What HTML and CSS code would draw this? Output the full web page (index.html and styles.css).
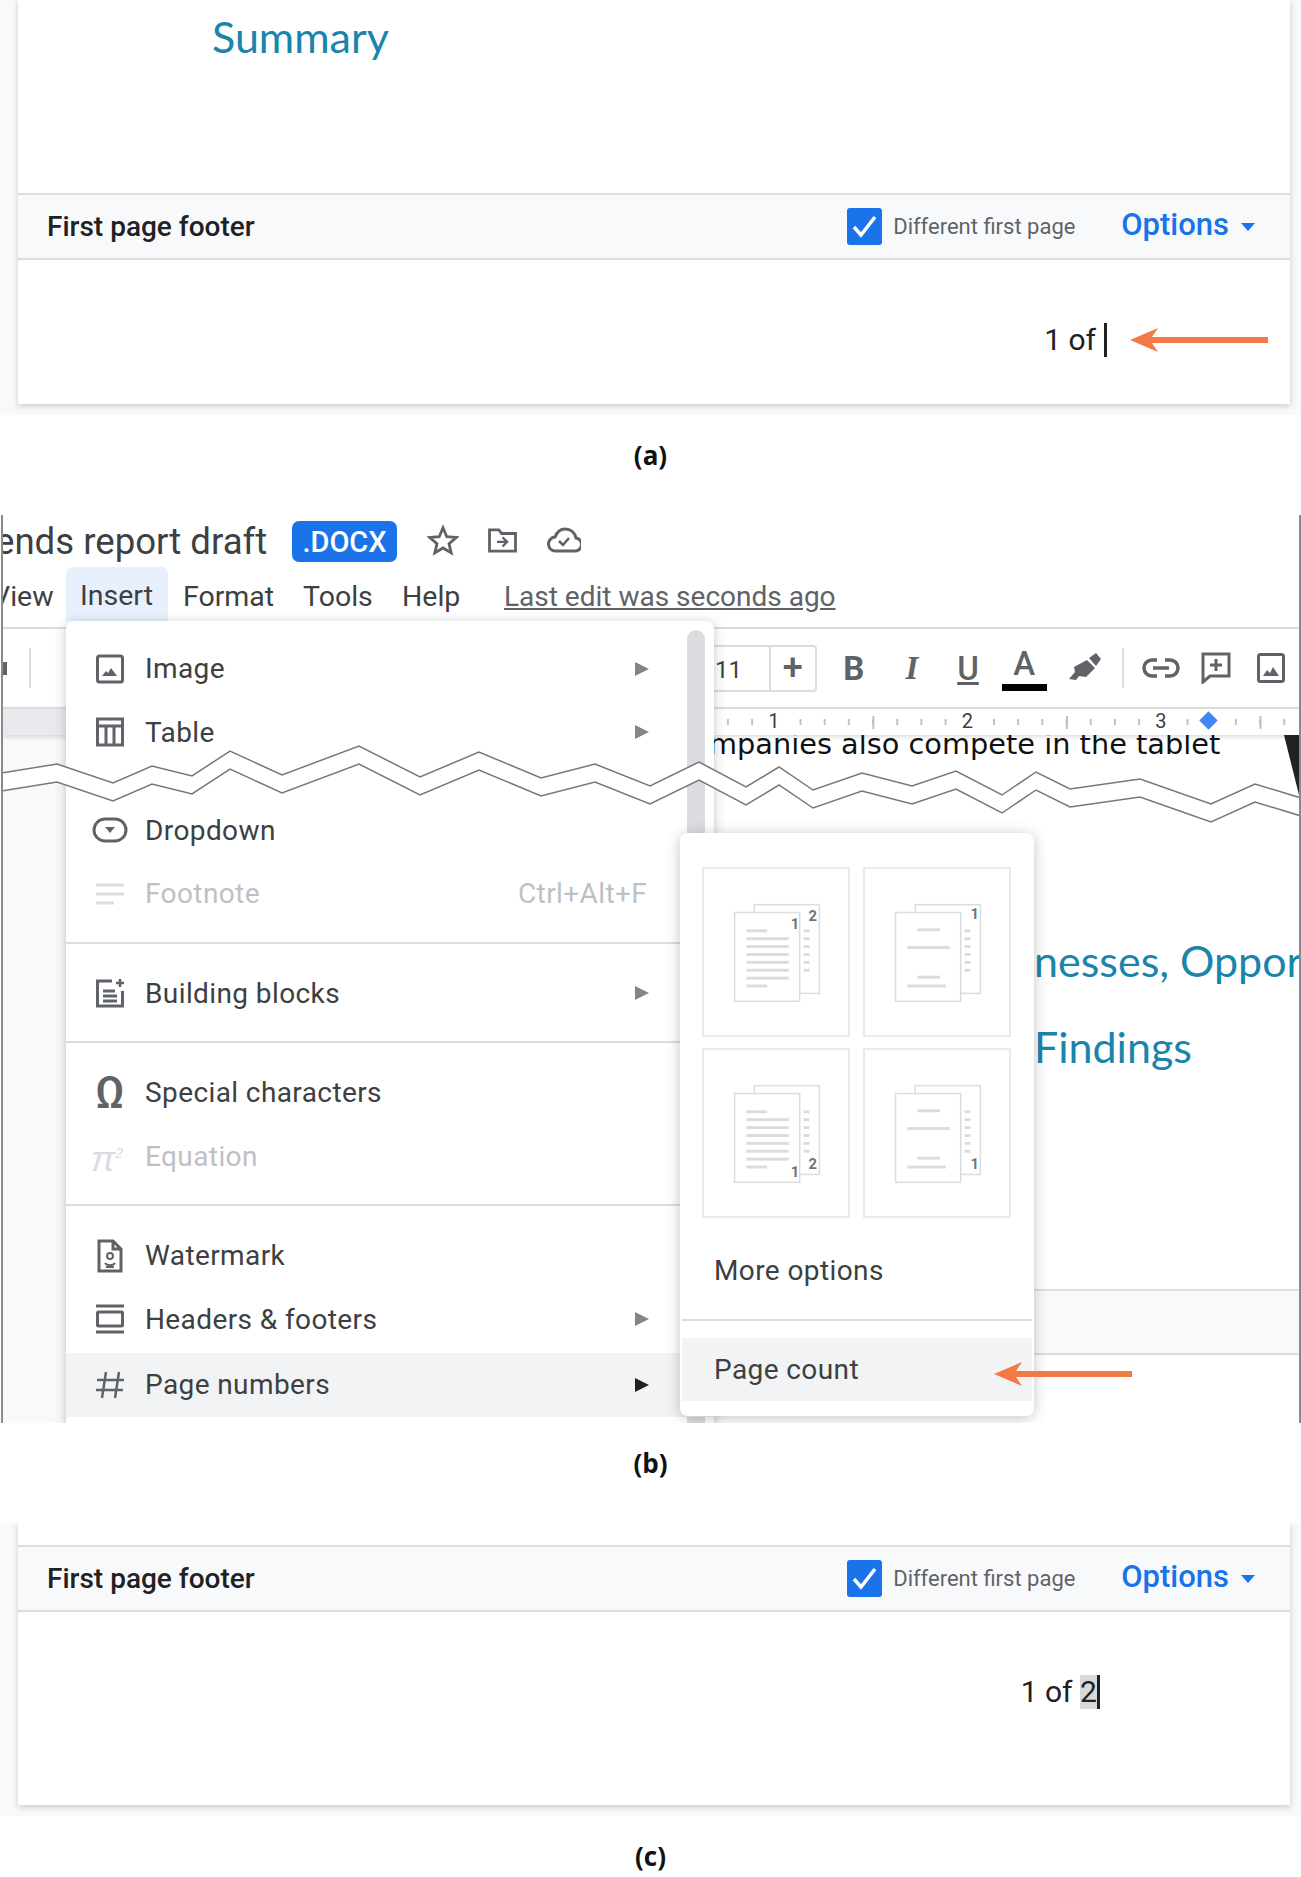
FILE: index.html
```html
<!DOCTYPE html>
<html lang="en">

<head>
    <meta charset="UTF-8">
    <title>Page count in a footer</title>
    <link rel="stylesheet" href="styles.css">
</head>

<body>
    <svg class="defs" width="0" height="0">
        <symbol id="pages" viewBox="0 0 148 168">
            <rect x="52" y="37" width="66" height="90" fill="#fff" stroke="#dadce0" stroke-width="1.5" />
            <rect x="32" y="45" width="66" height="90" fill="#fff" stroke="#dadce0" stroke-width="1.5" />
            <g fill="#dadce0">
                <rect x="102" y="62" width="6" height="3" />
                <rect x="102" y="70" width="6" height="3" />
                <rect x="102" y="78" width="6" height="3" />
                <rect x="102" y="86" width="6" height="3" />
                <rect x="102" y="94" width="6" height="3" />
                <rect x="102" y="102" width="6" height="3" />
            </g>
        </symbol>
        <symbol id="lines-dense" viewBox="0 0 148 168">
            <g fill="#dadce0">
                <rect x="44" y="62" width="21" height="3" />
                <rect x="44" y="70" width="43" height="3" />
                <rect x="44" y="78" width="43" height="3" />
                <rect x="44" y="86" width="43" height="3" />
                <rect x="44" y="94" width="43" height="3" />
                <rect x="44" y="102" width="43" height="3" />
                <rect x="44" y="110" width="43" height="3" />
                <rect x="44" y="118" width="21" height="3" />
            </g>
        </symbol>
        <symbol id="lines-sparse" viewBox="0 0 148 168">
            <g fill="#dadce0">
                <rect x="54" y="61" width="23" height="3" />
                <rect x="44" y="79" width="43" height="3" />
                <rect x="54" y="109" width="23" height="3" />
                <rect x="44" y="118" width="39" height="3" />
            </g>
        </symbol>
    </svg>

    <section class="panel">
        <div class="page">
            <div class="page-head">Summary</div>
            <div class="footer-bar">
                <span class="footer-title">First page footer</span>
                <span class="checkbox">
                    <svg width="35" height="37" viewBox="0 0 35 37"><path d="M7 19l7 8L28 9" fill="none" stroke="#fff" stroke-width="3.5" /></svg>
                </span>
                <span class="checkbox-label">Different first page</span>
                <span class="options">Options</span>
                <span class="options-caret"></span>
            </div>
            <div class="footer-body">
                <span class="page-field">1 of</span><span class="caret"></span>
            </div>
        </div>
        <svg class="arrow arrow-a" width="140" height="26" viewBox="0 0 140 26"><path d="M0 13L28 1l-6 9h116v6H22l6 9z" fill="#f47a45" /></svg>
    </section>
    <div class="caption">(a)</div>

    <section class="shot">
        <div class="title-row">
            <span class="doc-title">ends report draft</span>
            <span class="docx">.DOCX</span>
            <svg class="title-icon icon-star" width="32" height="32" viewBox="0 0 34 34"><path d="M17 4l4 9.500 10 .8-7.600 6.600 2.300 9.800L17 25.500 8.300 30.700l2.300-9.800L3 14.300l10-.8z" fill="none" stroke="#5f6368" stroke-width="3" /></svg>
            <svg class="title-icon icon-folder" width="31" height="26" viewBox="0 0 32 28"><path d="M2 3h10l3 4h15v19H2z" fill="none" stroke="#5f6368" stroke-width="3" /><path d="M10 16h10M16 11l5 5-5 5" fill="none" stroke="#5f6368" stroke-width="2.500" /></svg>
            <svg class="title-icon" width="34" height="26" viewBox="0 0 34 26"><path d="M9 24a7 7 0 0 1-1-14C10 5 14 2 18 2c6 0 10 4 11 9a6.500 6.500 0 0 1-2 13z" fill="none" stroke="#5f6368" stroke-width="3" /><path d="M12 14l4 4 6-7" fill="none" stroke="#5f6368" stroke-width="2.500" /></svg>
        </div>

        <div class="menu-bar">
            <span class="menu-view">View</span>
            <span class="menu-insert">Insert</span>
            <span class="menu-format">Format</span>
            <span class="menu-tools">Tools</span>
            <span class="menu-help">Help</span>
            <span class="last-edit">Last edit was seconds ago</span>
        </div>

        <div class="toolbar">
            <span class="tool-stub"></span>
            <span class="tool-sep tool-sep-left"></span>
            <div class="font-box">
                <span class="font-size">11</span>
                <span class="font-plus">+</span>
            </div>
            <span class="tool tool-b">B</span>
            <span class="tool tool-i">I</span>
            <span class="tool tool-u">U</span>
            <span class="tool tool-a">A</span>
            <span class="tool tool-pen">
                <svg width="34" height="34" viewBox="0 0 34 34"><path d="M21 7l7-5 5 6-5 7zM19 9l8 8-9 9-7-1-3 4-7-1 6-7-1-5z" fill="#5f6368" /></svg>
            </span>
            <span class="tool-sep tool-sep-right"></span>
            <span class="tool">
                <svg width="38" height="22" viewBox="0 0 38 22"><path d="M15 3H10a8 8 0 0 0 0 16h5M23 3h5a8 8 0 0 1 0 16h-5M11 11h16" fill="none" stroke="#5f6368" stroke-width="3.500" /></svg>
            </span>
            <span class="tool tool-comment">
                <svg width="30" height="32" viewBox="0 0 30 32"><path d="M2 2h26v22H9l-7 6zM15 7v12M9 13h12" fill="none" stroke="#5f6368" stroke-width="3" /></svg>
            </span>
            <span class="tool">
                <svg width="28" height="30" viewBox="0 0 28 30"><rect x="1.500" y="1.500" width="25" height="27" rx="2" fill="none" stroke="#5f6368" stroke-width="3" /><path d="M6 23l4-6 3 3 3-6 6 9z" fill="#5f6368" /></svg>
            </span>
        </div>

        <div class="ruler">
            <span class="ruler-margin"></span>
            <span class="ruler-num ruler-first"><b>1</b></span>
            <span class="ruler-num"><b>2</b></span>
            <span class="ruler-num"><b>3</b></span>
            <span class="ruler-stop"></span>
        </div>

        <div class="doc">
            <div class="doc-page">
                <p class="doc-text">mpanies also compete in the tablet</p>
                <span class="doc-picture"></span>
                <h2 class="doc-heading doc-heading-first">nesses, Oppor</h2>
                <h2 class="doc-heading doc-heading-second">Findings</h2>
                <div class="doc-footer-bar"></div>
            </div>
        </div>

        <div class="menu">
            <span class="menu-scroll"></span>
            <div class="menu-item">
                <svg class="menu-icon" width="30" height="30" viewBox="0 0 30 30"><rect x="2.500" y="2" width="25" height="26" rx="2" fill="none" stroke="#5f6368" stroke-width="3" /><path d="M7 22l4-5 2 2 3-5 6 8z" fill="#5f6368" /></svg>
                <span class="menu-label">Image</span>
                <span class="menu-tri"></span>
            </div>
            <div class="menu-item menu-item-cut">
                <svg class="menu-icon" width="30" height="30" viewBox="0 0 30 30"><path d="M2.500 2h25v26h-25zM2 9h26M11 9v19M19 9v19" fill="none" stroke="#5f6368" stroke-width="3" /></svg>
                <span class="menu-label">Table</span>
                <span class="menu-tri"></span>
            </div>
            <div class="menu-item">
                <svg class="menu-icon menu-icon-wide" width="36" height="26" viewBox="0 0 36 26"><rect x="2" y="2" width="32" height="22" rx="11" fill="none" stroke="#5f6368" stroke-width="3" /><path d="M13 10h10l-5 6z" fill="#5f6368" /></svg>
                <span class="menu-label">Dropdown</span>
            </div>
            <div class="menu-item menu-item-off">
                <svg class="menu-icon" width="30" height="30" viewBox="0 0 30 30"><path d="M1 6h28M1 15h28M1 24h18" fill="none" stroke="#dadce0" stroke-width="3" /></svg>
                <span class="menu-label">Footnote</span>
                <span class="menu-shortcut">Ctrl+Alt+F</span>
            </div>
            <div class="menu-line"></div>
            <div class="menu-item">
                <svg class="menu-icon" width="30" height="30" viewBox="0 0 30 30"><path d="M17 3H2.500v25h25V13M8 13h12M8 18h14M8 23h14" fill="none" stroke="#5f6368" stroke-width="3" /><path d="M25 1v8M21 5h8" fill="none" stroke="#5f6368" stroke-width="2.500" /></svg>
                <span class="menu-label">Building blocks</span>
                <span class="menu-tri"></span>
            </div>
            <div class="menu-line"></div>
            <div class="menu-item">
                <span class="menu-glyph">Ω</span>
                <span class="menu-label">Special characters</span>
            </div>
            <div class="menu-item menu-item-off">
                <span class="menu-glyph menu-glyph-pi">π<sup>2</sup></span>
                <span class="menu-label">Equation</span>
            </div>
            <div class="menu-line"></div>
            <div class="menu-item">
                <svg class="menu-icon" width="30" height="34" viewBox="0 0 30 34"><path d="M4 2h14l8 8v22H4zM18 2v8h8" fill="none" stroke="#5f6368" stroke-width="3" /><circle cx="15" cy="17" r="3" fill="none" stroke="#5f6368" stroke-width="2" /><path d="M10 24c2 3 8 3 10 0M11 28h8" fill="none" stroke="#5f6368" stroke-width="2" /></svg>
                <span class="menu-label">Watermark</span>
            </div>
            <div class="menu-item">
                <svg class="menu-icon" width="30" height="30" viewBox="0 0 30 30"><path d="M1 2h28M1 28h28" fill="none" stroke="#5f6368" stroke-width="3" /><rect x="2.500" y="8" width="25" height="14" rx="1" fill="none" stroke="#5f6368" stroke-width="3" /></svg>
                <span class="menu-label">Headers &amp; footers</span>
                <span class="menu-tri"></span>
            </div>
            <div class="menu-item menu-item-on">
                <svg class="menu-icon" width="30" height="30" viewBox="0 0 30 30"><path d="M11 2L7 28M24 2l-4 26M2 10h27M1 20h27" fill="none" stroke="#5f6368" stroke-width="2.500" /></svg>
                <span class="menu-label">Page numbers</span>
                <span class="menu-tri menu-tri-on"></span>
            </div>
        </div>

        <svg class="zigzag" width="1301" height="907" viewBox="0 0 1301 907">
            <polygon fill="#fff" points="2,258 57,249 113,268 152,251 192,261 230,236 282,260 359,231 420,262 479,237 541,263 595,249 650,271 699,247 746,272 779,252 813,275 862,258 912,271 956,256 1002,280 1036,257 1070,274 1140,264 1211,289 1255,269 1301,283 1301,301 1255,287 1211,307 1140,282 1070,292 1036,275 1002,298 956,274 912,289 862,276 813,293 779,270 746,290 699,265 650,289 595,267 541,281 479,255 420,280 359,249 282,278 230,254 192,279 152,269 113,286 57,267 2,276" />
            <polyline id="zig" fill="none" stroke="#777" stroke-width="1.500" points="2,258 57,249 113,268 152,251 192,261 230,236 282,260 359,231 420,262 479,237 541,263 595,249 650,271 699,247 746,272 779,252 813,275 862,258 912,271 956,256 1002,280 1036,257 1070,274 1140,264 1211,289 1255,269 1301,283" />
            <use href="#zig" y="18" />
        </svg>

        <div class="submenu">
            <div class="thumbs">
                <div class="thumb">
                    <svg width="146" height="168" viewBox="0 0 148 170"><use href="#pages" width="148" height="168" /><use href="#lines-dense" width="148" height="168" /><text class="thumb-num" x="89" y="62">1</text><text class="thumb-num" x="107" y="54">2</text></svg>
                </div>
                <div class="thumb">
                    <svg width="146" height="168" viewBox="0 0 148 170"><use href="#pages" width="148" height="168" /><use href="#lines-sparse" width="148" height="168" /><text class="thumb-num" x="108" y="52">1</text></svg>
                </div>
                <div class="thumb">
                    <svg width="146" height="168" viewBox="0 0 148 170"><use href="#pages" width="148" height="168" /><use href="#lines-dense" width="148" height="168" /><text class="thumb-num" x="89" y="130">1</text><text class="thumb-num" x="107" y="122">2</text></svg>
                </div>
                <div class="thumb">
                    <svg width="146" height="168" viewBox="0 0 148 170"><use href="#pages" width="148" height="168" /><use href="#lines-sparse" width="148" height="168" /><text class="thumb-num" x="108" y="122">1</text></svg>
                </div>
            </div>
            <div class="sub-item sub-item-more">More options</div>
            <div class="menu-line sub-line"></div>
            <div class="sub-item sub-item-on">Page count</div>
        </div>
        <svg class="arrow arrow-b" width="140" height="26" viewBox="0 0 140 26"><path d="M0 13L28 1l-6 9h116v6H22l6 9z" fill="#f47a45" /></svg>
    </section>
    <div class="caption">(b)</div>

    <section class="panel panel-c">
        <div class="page">
            <div class="page-head page-head-c"></div>
            <div class="footer-bar">
                <span class="footer-title">First page footer</span>
                <span class="checkbox">
                    <svg width="35" height="37" viewBox="0 0 35 37"><path d="M7 19l7 8L28 9" fill="none" stroke="#fff" stroke-width="3.5" /></svg>
                </span>
                <span class="checkbox-label">Different first page</span>
                <span class="options">Options</span>
                <span class="options-caret"></span>
            </div>
            <div class="footer-body footer-body-c">
                <span class="page-field">1 of <span class="page-total">2</span></span><span class="caret caret-c"></span>
            </div>
        </div>
    </section>
    <div class="caption caption-last">(c)</div>
</body>

</html>
```

FILE: styles.css
```css
body {
    margin: 0;
    padding: 0;
    width: 1301px;
    overflow-x: hidden;
    background-color: #fff;
    font-family: Roboto, sans-serif;
    color: #3c4043;
}

.defs {
    position: absolute;
}

/* footer panels (a) and (c) */
.panel {
    position: relative;
    height: 415px;
    padding: 0 11px 11px 18px;
    box-sizing: border-box;
    overflow: hidden;
    background-color: #f8f9fa;
}

.panel-c {
    height: 293px;
}

.page {
    height: 100%;
    background-color: #fff;
    box-shadow: 0 2px 6px rgba(60, 64, 67, 0.25);
}

.page-head {
    height: 193px;
    padding: 10px 0 0 194px;
    box-sizing: border-box;
    font-family: Lato, sans-serif;
    font-size: 43px;
    line-height: 54px;
    color: #1a84ab;
}

.page-head-c {
    height: 22px;
    padding: 0;
}

.footer-bar {
    display: flex;
    align-items: center;
    height: 67px;
    padding: 0 35px 0 29px;
    box-sizing: border-box;
    background-color: #f8f9fa;
    border-top: 2px solid #dadce0;
    border-bottom: 2px solid #dadce0;
}

.footer-title {
    margin-right: auto;
    font-size: 28px;
    font-weight: 500;
    color: #202124;
}

.checkbox {
    display: flex;
    width: 35px;
    height: 37px;
    background-color: #1a73e8;
    border-radius: 3px;
}

.checkbox-label {
    margin-left: 11px;
    width: 183px;
    font-size: 22px;
    color: #5f6368;
    white-space: nowrap;
}

.options {
    margin-left: 45px;
    font-size: 31px;
    font-weight: 500;
    line-height: 34px;
    margin-top: -3px;
    color: #1a73e8;
}

.options-caret {
    margin-left: 12px;
    border-top: 8px solid #1a73e8;
    border-left: 7px solid transparent;
    border-right: 7px solid transparent;
}

.footer-body {
    display: flex;
    justify-content: flex-end;
    padding: 63px 183px 0 0;
    font-size: 30px;
    line-height: 34px;
    color: #202124;
}

.footer-body-c {
    padding-right: 190px;
}

.page-field {
    white-space: pre;
}

.page-total {
    display: inline-block;
    width: 17px;
    background-color: #d8d8d8;
}

.caret {
    width: 3px;
    height: 34px;
    margin-left: 8px;
    background-color: #202124;
}

.caret-c {
    margin-left: 0;
}

.caption {
    height: 100px;
    padding-top: 25px;
    box-sizing: border-box;
    text-align: center;
    font-family: "Open Sans", sans-serif;
    font-size: 26px;
    line-height: 30px;
    font-weight: 700;
    color: #111;
}

.caption-last {
    height: 62px;
}

.arrow {
    position: absolute;
}

.arrow-a {
    left: 1130px;
    top: 327px;
}

.arrow-b {
    left: 991px;
    top: 846px;
    z-index: 6;
}

/* screenshot (b) */
.shot {
    position: relative;
    height: 908px;
    width: 1300px;
    margin-left: 1px;
    box-sizing: border-box;
    overflow: hidden;
    border-left: 2px solid #8a8a8a;
    border-right: 2px solid #8a8a8a;
    background-color: #fff;
}

.title-row {
    display: flex;
    align-items: center;
    height: 52px;
}

.doc-title {
    margin-left: -8px;
    width: 297px;
    font-size: 36.6px;
    color: #3c4043;
    white-space: nowrap;
}

.docx {
    width: 105px;
    height: 41px;
    margin-right: 30px;
    line-height: 43px;
    text-align: center;
    font-size: 29px;
    font-weight: 500;
    color: #fff;
    background-color: #1a73e8;
    border-radius: 7px;
}

.title-icon {
    margin: 0 29px 2px 0;
}

.icon-star {
    margin: 0 28px 2px 0;
}

.menu-bar {
    display: flex;
    align-items: center;
    height: 60px;
    font-size: 28.5px;
    color: #3c4043;
    border-bottom: 2px solid #dadce0;
    box-sizing: content-box;
}

.menu-view {
    margin-left: -11px;
    width: 74px;
    padding-bottom: 2px;
}

.menu-insert {
    height: 54px;
    width: 102px;
    padding-left: 14px;
    margin-bottom: 6px;
    box-sizing: border-box;
    line-height: 58px;
    background-color: #e8f0fe;
    border-radius: 6px 6px 0 0;
}

.menu-format {
    margin-left: 15px;
    width: 120px;
    padding-bottom: 2px;
}

.menu-tools {
    width: 99px;
    padding-bottom: 2px;
}

.menu-help {
    width: 102px;
    padding-bottom: 2px;
}

.last-edit {
    font-size: 28px;
    padding-bottom: 2px;
    color: #5f6368;
    text-decoration: underline;
}

.toolbar {
    display: flex;
    align-items: center;
    height: 78px;
    background-color: #fff;
}

.tool-stub {
    width: 4px;
    height: 13px;
    background-color: #5f6368;
}

.tool-sep {
    width: 2px;
    height: 40px;
    background-color: #dadce0;
}

.tool-sep-left {
    margin-left: 22px;
}

.tool-sep-right {
    margin: 0 9px;
}

.font-box {
    display: flex;
    height: 47px;
    width: 167px;
    margin-left: 620px;
    margin-right: 9px;
    border: 2px solid #dadce0;
    border-radius: 4px;
    box-sizing: border-box;
}

.font-size {
    width: 118px;
    padding-left: 62px;
    box-sizing: border-box;
    line-height: 47px;
    font-size: 24px;
    color: #3c4043;
    border-right: 2px solid #dadce0;
}

.font-plus {
    flex: 1;
    text-align: center;
    line-height: 42px;
    font-size: 36px;
    font-weight: 500;
    color: #5f6368;
}

.tool {
    display: flex;
    align-items: center;
    justify-content: center;
    width: 56.500px;
    height: 50px;
    font-size: 33px;
    color: #5f6368;
}

.tool-b {
    font-weight: 700;
}

.tool-i {
    margin-left: 2px;
    font-family: "Liberation Serif", serif;
    font-style: italic;
    font-weight: 700;
}

.tool-u {
    font-weight: 500;
    text-decoration: underline;
    text-decoration-thickness: 3px;
}

.tool-a {
    height: 47px;
    padding-top: 3px;
    margin-bottom: 4px;
    align-items: flex-start;
    font-weight: 500;
    background: linear-gradient(#000, #000) center bottom / 45px 7px no-repeat;
}

.tool-pen {
    margin-left: 5px;
}

.tool-comment {
    width: 54px;
}

.ruler {
    position: relative;
    z-index: 2;
    display: flex;
    align-items: center;
    height: 28px;
    box-sizing: border-box;
    border-top: 2px solid #dadce0;
    background:
        linear-gradient(90deg, #bdc1c6 1.5px, transparent 1.5px) 95px center / 193.600px 13px repeat-x,
        linear-gradient(90deg, #bdc1c6 1.5px, transparent 1.5px) 22.500px center / 24.200px 6px repeat-x,
        #fff;
    box-shadow: 0 2px 4px rgba(60, 64, 67, 0.18);
}

.ruler-margin {
    width: 100px;
    height: 100%;
    background-color: #e8eaed;
}

.ruler-num {
    width: 193.600px;
    text-align: center;
    line-height: 24px;
}

.ruler-first {
    margin-left: 574px;
}

.ruler-num b {
    padding: 0 3px;
    font-size: 20px;
    font-weight: 400;
    color: #3c4043;
    background-color: #fff;
}

.ruler-stop {
    position: absolute;
    left: 1199px;
    top: 5px;
    width: 13px;
    height: 13px;
    background-color: #4285f4;
    transform: rotate(45deg);
}

.doc {
    height: 689px;
    background-color: #f8f9fa;
}

.doc-page {
    position: relative;
    height: 100%;
    margin-left: 63px;
    background-color: #fff;
}

.doc-text {
    margin: 0;
    padding: 0 0 0 643px;
    font-family: "DejaVu Sans", sans-serif;
    font-size: 28.8px;
    line-height: 19px;
    color: #111;
    white-space: nowrap;
}

.doc-picture {
    position: absolute;
    left: 1218px;
    top: 0;
    width: 15px;
    height: 60px;
    background-color: #222;
    clip-path: polygon(0 0, 100% 0, 100% 100%);
}

.doc-heading {
    margin: 0;
    padding-left: 968px;
    font-family: Lato, sans-serif;
    font-weight: 400;
    font-size: 43px;
    line-height: 54px;
    color: #1a84ab;
    white-space: nowrap;
}

.doc-heading-first {
    margin-top: 180px;
}

.doc-heading-second {
    margin-top: 32px;
}

.doc-footer-bar {
    height: 66px;
    margin-top: 215px;
    box-sizing: border-box;
    background-color: #f8f9fa;
    border-top: 2px solid #dadce0;
    border-bottom: 2px solid #dadce0;
}

/* insert menu */
.menu {
    position: absolute;
    z-index: 3;
    left: 63px;
    top: 106px;
    width: 648px;
    height: 830px;
    padding-top: 16px;
    box-sizing: border-box;
    background-color: #fff;
    border-radius: 8px 8px 0 0;
    box-shadow: 0 2px 12px rgba(60, 64, 67, 0.3);
}

.menu-scroll {
    position: absolute;
    left: 621px;
    top: 9px;
    width: 18px;
    height: 821px;
    background-color: #dadce0;
    border-radius: 9px;
}

.menu-item {
    position: relative;
    display: flex;
    align-items: center;
    height: 63.500px;
    padding-left: 29px;
    font-size: 28px;
    color: #3c4043;
}

.menu-item-cut {
    margin-bottom: 34.5px;
}

.menu-item-on {
    margin-top: 2px;
    background-color: #f1f3f4;
}

.menu-item-off {
    color: #bdc1c6;
}

.menu-icon {
    width: 30px;
    flex: none;
}

.menu-icon-wide {
    width: 36px;
    margin-left: -3px;
    margin-right: -3px;
}

.menu-glyph {
    width: 30px;
    text-align: center;
    font-size: 44px;
    line-height: 42px;
    font-weight: 500;
    color: #5f6368;
}

.menu-glyph-pi {
    margin-left: -4px;
    margin-right: 4px;
    font-family: "Liberation Sans", sans-serif;
    font-size: 36px;
    font-weight: 400;
    font-style: italic;
    white-space: nowrap;
    color: #dadce0;
}

.menu-glyph-pi sup {
    font-size: 14px;
}

.menu-label {
    margin-left: 20px;
    letter-spacing: 0.4px;
}

.menu-shortcut {
    position: absolute;
    left: 452px;
    letter-spacing: 0.4px;
}

.menu-tri {
    position: absolute;
    left: 569px;
    border-left: 14px solid #80868b;
    border-top: 7px solid transparent;
    border-bottom: 7px solid transparent;
}

.menu-tri-on {
    border-left-color: #202124;
}

.menu-line {
    height: 2px;
    margin: 16px 0 18px;
    background-color: #dadce0;
}

.zigzag {
    position: absolute;
    z-index: 4;
    left: -3px;
    top: 0;
}

/* page numbers submenu */
.submenu {
    position: absolute;
    z-index: 5;
    left: 677px;
    top: 318px;
    width: 354px;
    height: 583px;
    padding: 34px 2px 0;
    box-sizing: border-box;
    background-color: #fff;
    border-radius: 8px;
    box-shadow: 0 2px 14px rgba(60, 64, 67, 0.3);
}

.thumbs {
    display: grid;
    grid-template-columns: 148px 148px;
    column-gap: 13px;
    row-gap: 11px;
    padding-left: 20px;
}

.thumb {
    height: 170px;
    box-sizing: border-box;
    border: 2px solid #e8eaed;
}

.thumb svg {
    display: block;
    margin: -1px;
}

.thumb-num {
    font-size: 15px;
    font-weight: 700;
    fill: #70757a;
}

.sub-item {
    display: flex;
    align-items: center;
    height: 63px;
    padding-left: 32px;
    font-size: 28px;
    letter-spacing: 0.4px;
    color: #3c4043;
}

.sub-item-more {
    margin-top: 21px;
}

.sub-line {
    margin: 17px 0;
}

.sub-item-on {
    background-color: #f1f3f4;
}
```
